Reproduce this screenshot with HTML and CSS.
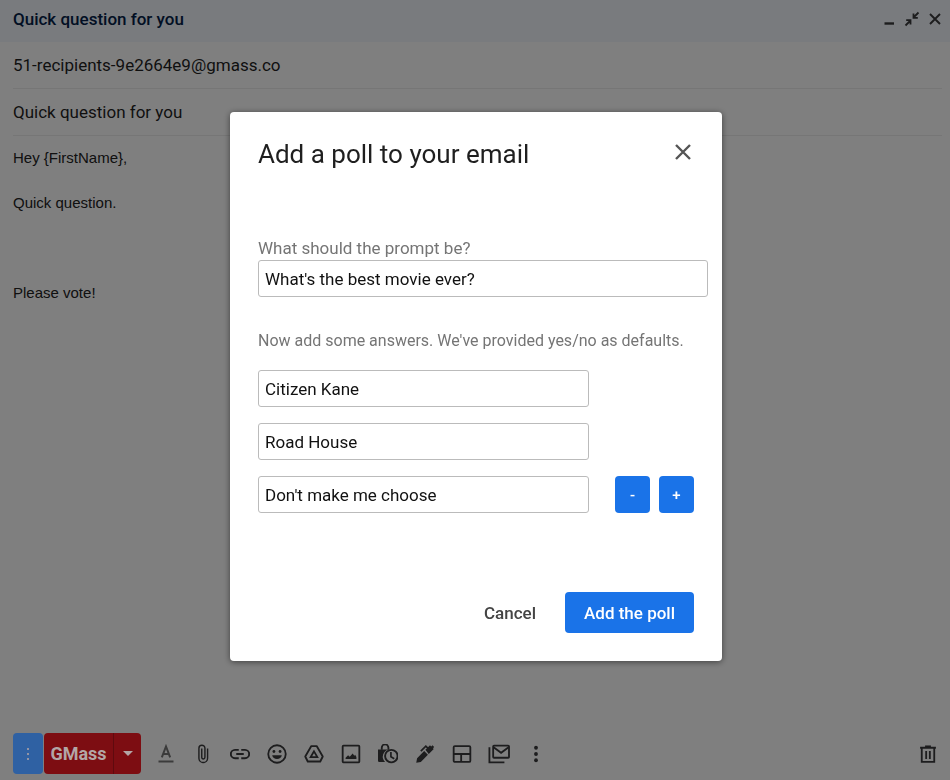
FILE: index.html
```
<!DOCTYPE html>
<html lang="en">
<head>
  <meta charset="UTF-8">
  <meta name="viewport" content="width=device-width, initial-scale=1.0">
  <title>Quick question for you</title>
  <link rel="stylesheet" href="styles.css">
</head>
<body>
  <div class="compose">
    <header class="compose-header">
      <h1 class="compose-title">Quick question for you</h1>
      <div class="window-controls">
        <button class="icon-btn" aria-label="Minimize">
          <svg viewBox="0 0 16 16"><path d="M3.500 12.500h9.500" stroke-width="2.4"/></svg>
        </button>
        <button class="icon-btn" aria-label="Exit full screen">
          <svg viewBox="0 0 16 16"><path d="M14.5 1.5L9.5 6.5M9.5 2.5v4.3h4.3M1.5 14.5L6.5 9.500M2.200 9.200h4.300v4.300" stroke-width="1.8"/></svg>
        </button>
        <button class="icon-btn" aria-label="Close draft">
          <svg viewBox="0 0 16 16"><path d="M3 3l10 10M13 3L3 13" stroke-width="1.9"/></svg>
        </button>
      </div>
    </header>

    <div class="fields">
      <div class="field">51-recipients-9e2664e9@gmass.co</div>
      <div class="field">Quick question for you</div>
    </div>

    <div class="message">
      <p>Hey {FirstName},</p>
      <p>Quick question.</p>
      <p><br></p>
      <p>Please vote!</p>
    </div>

    <div class="toolbar">
      <div class="gmass">
        <button class="gmass-settings" aria-label="GMass settings">
          <svg viewBox="0 0 4 14"><circle cx="2" cy="2" r="1"/><circle cx="2" cy="7" r="1"/><circle cx="2" cy="12" r="1"/></svg>
        </button>
        <button class="gmass-send">GMass</button>
        <button class="gmass-more" aria-label="More send options">
          <svg viewBox="0 0 10 5"><path d="M0 0h10L5 5z"/></svg>
        </button>
      </div>

      <div class="tools">
        <button class="icon-btn faded" aria-label="Formatting options">
          <svg viewBox="0 0 24 24"><path d="M7 16L12 3l5 13M8.700 12h6.600" stroke-width="2.400"/><path d="M3 21h18" stroke-width="2.400"/></svg>
        </button>
        <button class="icon-btn" aria-label="Attach files">
          <svg viewBox="0 0 24 24"><path d="M17.500 5.500v11.500a5.200 5.200 0 0 1-10.400 0V5a3.600 3.600 0 0 1 7.200 0v11a1.900 1.900 0 0 1-3.800 0V5.500" stroke-width="1.700"/></svg>
        </button>
        <button class="icon-btn" aria-label="Insert link">
          <svg viewBox="0 0 24 24"><path d="M10.500 7H6a5 5 0 0 0 0 10h4.500M13.500 7H18a5 5 0 0 1 0 10h-4.500M7.500 12h9" stroke-width="2.300"/></svg>
        </button>
        <button class="icon-btn" aria-label="Insert emoji">
          <svg viewBox="0 0 24 24"><circle cx="12" cy="12" r="10.500" stroke-width="2.200"/><circle class="solid" cx="8.300" cy="9" r="1.700"/><circle class="solid" cx="15.700" cy="9" r="1.700"/><path class="solid" d="M6.200 13.500h11.600a6 6 0 0 1-11.600 0z"/></svg>
        </button>
        <button class="icon-btn" aria-label="Insert files using Drive">
          <svg viewBox="0 0 24 24"><path d="M8.800 2.500h6.400L22.500 15l-3 6h-15l-3-6z" stroke-width="2.200" stroke-linejoin="round"/><path d="M12 8.800l4 7H8z" stroke-width="2.200"/></svg>
        </button>
        <button class="icon-btn" aria-label="Insert photo">
          <svg viewBox="0 0 24 24"><rect x="2" y="2" width="20" height="20" rx="1" stroke-width="2.200"/><path class="solid" d="M5.500 18v-1.500l3-3 2 1.800 3.500-4 2 2.700 1-1 1.500 2.500V18z"/></svg>
        </button>
        <button class="icon-btn" aria-label="Confidential mode">
          <svg viewBox="0 0 24 24"><path d="M4.500 7V4.500a4 4 0 0 1 8 0V7" stroke-width="2.200"/><path class="solid" d="M0 6.500h13a8.800 8.800 0 0 0-4.500 15H1.500A1.500 1.500 0 0 1 0 20z"/><circle cx="16" cy="14.500" r="7.500" stroke-width="2.300"/><path d="M15.500 9.500v5.700l4 2.500" stroke-width="2"/></svg>
        </button>
        <button class="icon-btn" aria-label="Insert signature">
          <svg viewBox="0 0 24 24"><path class="solid" d="M1.500 22.500l1-5.500 8.500-8.500 4.500 4.500L7 21.500zM12.500 7l5.500-5.500 1.500 1.500L21 1.500 23 3.500l-1.500 1.500 1 1-6 6z"/><path d="M7 8.500L13 2.500l3 3" stroke-width="2"/></svg>
        </button>
        <button class="icon-btn" aria-label="Choose a layout">
          <svg viewBox="0 0 24 24"><rect x="2" y="2.500" width="20" height="19" rx="1.500" stroke-width="2.200"/><path d="M2 12h20M11 12v9.500" stroke-width="2.200"/></svg>
        </button>
        <button class="icon-btn" aria-label="Multi-send">
          <svg class="wide" viewBox="0 0 26 24"><rect x="6" y="2" width="19" height="14.500" rx="1" stroke-width="2.200"/><path d="M6.500 4l9 6.500 9-6.500M1.500 4v18h18" stroke-width="2.200"/></svg>
        </button>
        <button class="icon-btn" aria-label="More options">
          <svg viewBox="0 0 24 24"><g class="solid"><circle cx="12" cy="4.500" r="2.300"/><circle cx="12" cy="12" r="2.300"/><circle cx="12" cy="19.500" r="2.300"/></g></svg>
        </button>
      </div>

      <button class="icon-btn" aria-label="Discard draft">
        <svg viewBox="0 0 24 24"><path d="M2.500 4.500h19M4.500 4.500V21.500h15V4.500M9.800 8.500v9.500M14.200 8.500v9.500" stroke-width="2.200"/><path d="M8.500 3h7" stroke-width="2.500"/></svg>
      </button>
    </div>
  </div>

  <div class="backdrop">
    <form class="dialog" role="dialog" aria-labelledby="dialog-title">
      <div class="dialog-header">
        <h2 class="dialog-title" id="dialog-title">Add a poll to your email</h2>
        <button type="button" class="dialog-close" aria-label="Close">
          <svg viewBox="0 0 16 16"><path d="M1 1l14 14M15 1L1 15"/></svg>
        </button>
      </div>

      <label class="hint" for="prompt">What should the prompt be?</label>
      <input class="text-input" id="prompt" type="text" value="What's the best movie ever?">

      <p class="hint answers-hint">Now add some answers. We've provided yes/no as defaults.</p>
      <div class="answers">
        <div class="answer">
          <input class="text-input" type="text" aria-label="Answer 1" value="Citizen Kane">
        </div>
        <div class="answer">
          <input class="text-input" type="text" aria-label="Answer 2" value="Road House">
        </div>
        <div class="answer">
          <input class="text-input" type="text" aria-label="Answer 3" value="Don't make me choose">
          <div class="steppers">
            <button type="button" class="step-btn">-</button>
            <button type="button" class="step-btn">+</button>
          </div>
        </div>
      </div>

      <div class="dialog-actions">
        <button type="button" class="cancel-btn">Cancel</button>
        <button type="submit" class="submit-btn">Add the poll</button>
      </div>
    </form>
  </div>
</body>
</html>
```
FILE: styles.css
```
* {
  margin: 0;
  padding: 0;
  box-sizing: border-box;
}

html, body {
  height: 100%;
}

body {
  font-family: Roboto, sans-serif;
  font-size: 17px;
  line-height: 24px;
  color: #1f1f1f;
  background: #fff;
}

button, input {
  font: inherit;
  border: none;
}

button {
  background: none;
  cursor: pointer;
}

/* compose window */
.compose {
  display: flex;
  flex-direction: column;
  min-height: 100vh;
}

.compose-header {
  display: flex;
  justify-content: space-between;
  align-items: center;
  height: 42px;
  padding: 0 7px 4px 13px;
  background: #f2f6fc;
}

.compose-title {
  font-size: 17px;
  font-weight: 500;
  color: #041e49;
}

.window-controls {
  display: flex;
  gap: 7px;
}

.icon-btn {
  display: flex;
  align-items: center;
  justify-content: center;
}

.icon-btn svg {
  width: 16px;
  height: 16px;
  fill: none;
  stroke: #3a3a3c;
}

.fields {
  padding: 0 8px 0 13px;
}

.field {
  padding: 11px 0;
  border-bottom: 1px solid #ececec;
}

.message {
  flex: 1;
  display: flex;
  flex-direction: column;
  gap: 22px;
  padding: 10px 13px;
  font-family: "Liberation Sans", Arial, sans-serif;
  font-size: 15px;
  line-height: 23px;
  color: #222;
}

/* bottom bar */
.toolbar {
  display: flex;
  align-items: center;
  gap: 14px;
  padding: 0 12px 6px 13px;
}

/* stays above the backdrop */
.gmass {
  position: relative;
  z-index: 2;
  display: flex;
  height: 41px;
  color: #b3a6a6;
}

.gmass button {
  display: flex;
  align-items: center;
  justify-content: center;
  color: inherit;
}

.gmass svg {
  fill: currentColor;
}

.gmass-settings {
  width: 30px;
  margin-right: 1px;
  border-radius: 4px;
  background: #2f61a3;
}

.gmass-settings svg {
  width: 4px;
  height: 14px;
}

.gmass-send {
  width: 69px;
  border-radius: 4px 0 0 4px;
  background: #7d0d12;
  font-size: 18px;
  font-weight: 700;
}

.gmass .gmass-more {
  width: 28px;
  border-left: 1px solid #5f0a0e;
  border-radius: 0 4px 4px 0;
  background: #7d0d12;
}

.gmass-more svg {
  width: 10px;
  height: 5px;
}

.tools {
  flex: 1;
  display: flex;
  gap: 16px;
}

.toolbar .icon-btn {
  width: 21px;
  height: 21px;
}

.toolbar .icon-btn svg {
  flex: none;
  width: 20px;
  height: 20px;
}

.toolbar .icon-btn .wide {
  width: 22px;
}

.toolbar .faded svg {
  stroke: #777;
}

.solid {
  fill: #3a3a3c;
  stroke: none;
}

/* poll dialog */
.backdrop {
  position: fixed;
  inset: 0;
  z-index: 1;
  display: flex;
  align-items: center;
  justify-content: center;
  padding: 0 0 7px 2px;
  background: rgba(0, 0, 0, 0.5);
}

.dialog {
  width: 492px;
  padding: 24px 14px 28px 28px;
  border-radius: 4px;
  background: #fff;
  box-shadow: 0 1px 6px rgba(0, 0, 0, 0.5);
}

.dialog-header {
  display: flex;
  justify-content: space-between;
  align-items: center;
  padding-right: 16px;
  margin-bottom: 64px;
}

.dialog-title {
  font-size: 26px;
  font-weight: 400;
  line-height: 36px;
}

.dialog-close {
  display: flex;
  padding: 0 1px 4px;
}

.dialog-close svg {
  width: 16px;
  height: 16px;
  stroke: #555;
  stroke-width: 2.4;
}

.hint {
  display: block;
  color: #757575;
}

.text-input {
  width: 100%;
  height: 37px;
  padding: 0 6px;
  border: 1px solid #bbb;
  border-radius: 3px;
  background: #fff;
  color: #111;
}

.answers-hint {
  margin: 32px 0 17px;
  font-size: 16px;
}

.answers {
  display: flex;
  flex-direction: column;
  gap: 16px;
}

.answer {
  display: flex;
  justify-content: space-between;
  padding-right: 14px;
}

.answer .text-input {
  width: 331px;
}

.steppers {
  display: flex;
  gap: 9px;
}

.step-btn {
  width: 35px;
  border-radius: 4px;
  background: #1a73e8;
  color: #fff;
  font-size: 15px;
  font-weight: 500;
}

.dialog-actions {
  display: flex;
  justify-content: flex-end;
  align-items: center;
  gap: 29px;
  margin-top: 79px;
  padding-right: 14px;
}

.cancel-btn {
  color: #444;
  font-weight: 500;
}

.submit-btn {
  height: 41px;
  padding: 0 19px;
  border-radius: 4px;
  background: #1a73e8;
  color: #fff;
  font-weight: 500;
}
```
